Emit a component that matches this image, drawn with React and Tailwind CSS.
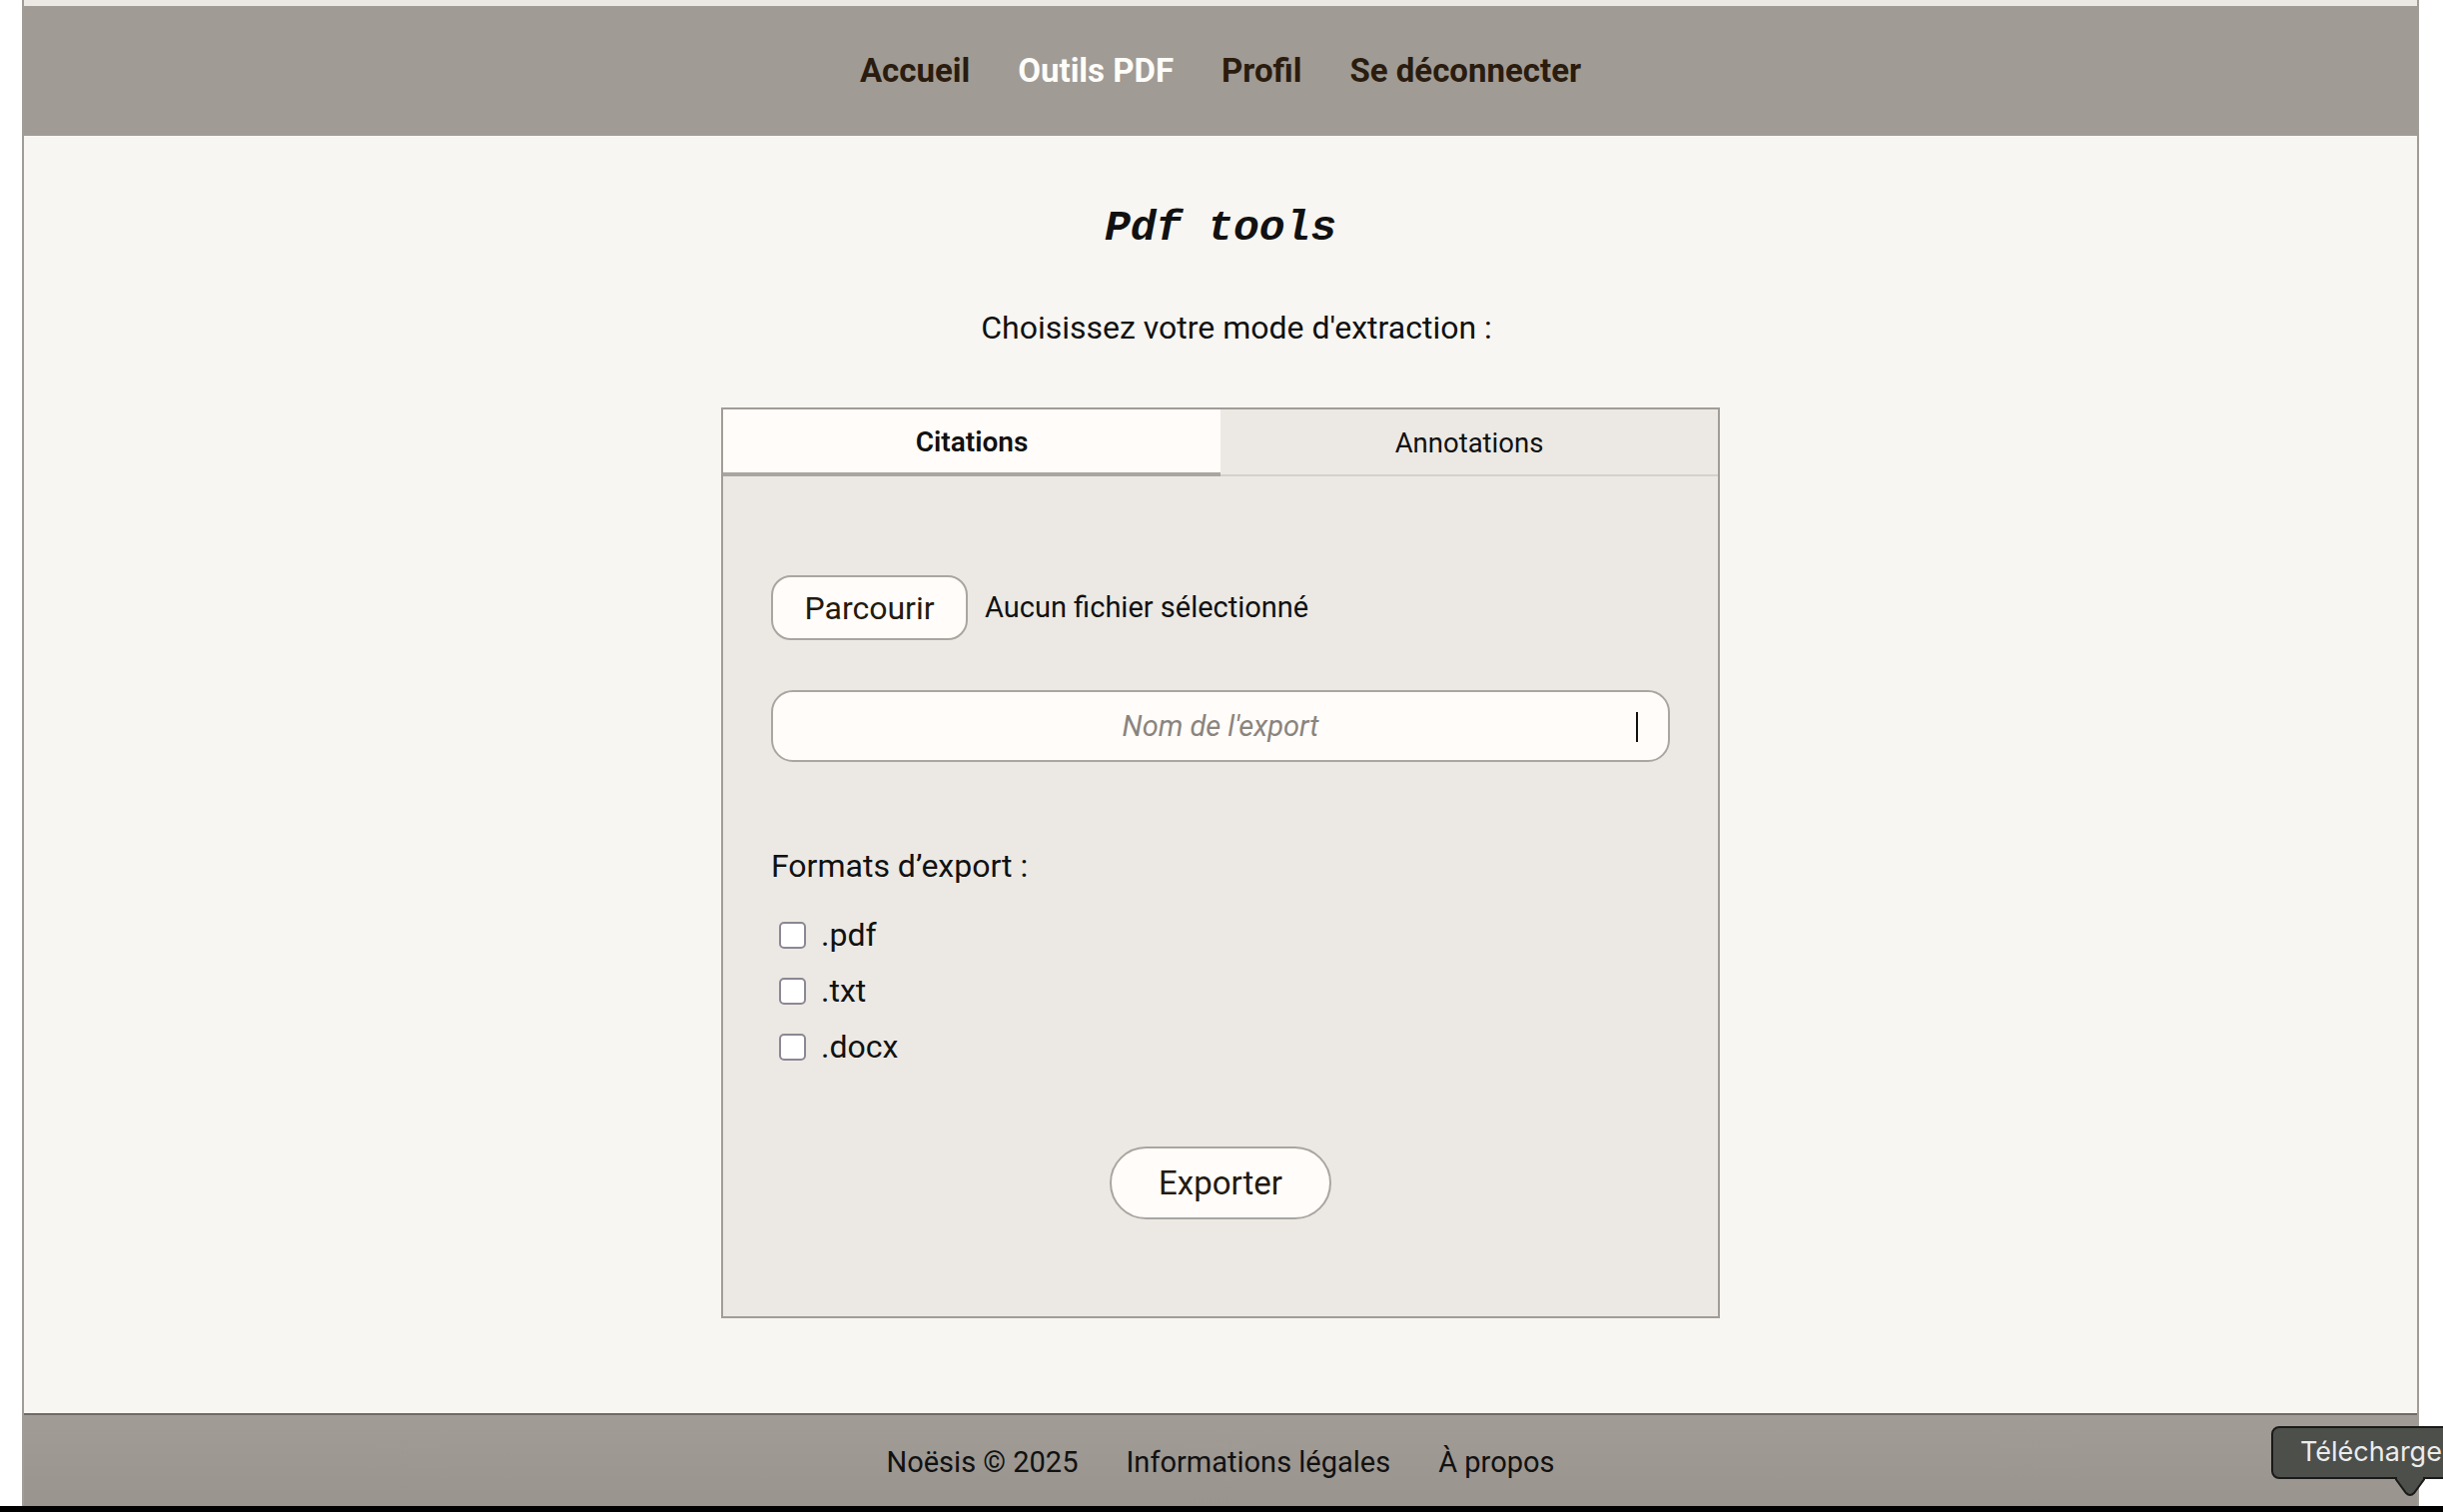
import { useState } from 'react';

const formats = ['.pdf', '.txt', '.docx'];

export default function App() {
  const [tab, setTab] = useState('citations');
  const [checked, setChecked] = useState({});

  const toggle = (f) => setChecked({ ...checked, [f]: !checked[f] });

  return (
    <div className="relative w-[2446px] h-[1514px] overflow-hidden bg-white flex flex-col font-['Roboto',sans-serif]">
      <div className="flex-1 flex pl-[22px] pr-[24px]">
        <div className="flex-1 flex flex-col border-x-2 border-[#a19c96]">
          <div className="h-[6px] bg-[#ece9e4]" />

          {/* barre de navigation */}
          <nav className="h-[130px] bg-[#a09b95] flex items-center justify-center gap-12 text-[33px] font-bold text-[#2a1c0e]">
            <a>Accueil</a>
            <a className="text-[#fffdf9]">Outils PDF</a>
            <a>Profil</a>
            <a>Se déconnecter</a>
          </nav>

          <main className="flex-1 bg-[#f7f6f2] flex flex-col items-center pt-[67px]">
            <h1 className="font-['Liberation_Mono',monospace] italic font-bold text-[43px] leading-[52px] text-[#111]">
              Pdf tools
            </h1>
            <p className="mt-[55px] pl-[32px] text-[32px] leading-[36px] text-[#111]">
              Choisissez votre mode d'extraction :
            </p>

            <div className="mt-[62px] w-[1000px] border-2 border-[#a19c96] bg-[#ece9e4]">
              <div className="flex h-[67px]">
                <button
                  onClick={() => setTab('citations')}
                  className={
                    tab === 'citations'
                      ? 'flex-1 pt-[2px] bg-[#fffcf9] border-b-4 border-[#aaa5a0] text-[28px] font-semibold text-[#111]'
                      : 'flex-1 pt-[2px] bg-[#ece9e4] border-b-2 border-[#d4d0cb] text-[27.5px] text-[#111]'
                  }
                >
                  Citations
                </button>
                <button
                  onClick={() => setTab('annotations')}
                  className={
                    tab === 'annotations'
                      ? 'flex-1 pt-[2px] bg-[#fffcf9] border-b-4 border-[#aaa5a0] text-[28px] font-semibold text-[#111]'
                      : 'flex-1 pt-[2px] bg-[#ece9e4] border-b-2 border-[#d4d0cb] text-[27.5px] text-[#111]'
                  }
                >
                  Annotations
                </button>
              </div>

              <div className="px-[48px] pt-[99px] pb-[97px] flex flex-col">
                <div className="flex items-center gap-[17px]">
                  <button className="w-[197px] h-[65px] rounded-[20px] border-2 border-[#aaa5a0] bg-[#fffcf9] text-[32px] text-[#231a10]">
                    Parcourir
                  </button>
                  <span className="text-[29px] text-[#111]">Aucun fichier sélectionné</span>
                </div>

                <div className="relative mt-[50px] h-[72px] rounded-[22px] border-2 border-[#aaa5a0] bg-[#fffcf9] flex items-center justify-center">
                  <span className="italic text-[29px] text-[#8a847e] pt-[2px]">Nom de l'export</span>
                  <span className="absolute right-[30px] top-[20px] w-[2px] h-[30px] bg-[#111]" />
                </div>

                <p className="mt-[86px] text-[32px] leading-[36px] text-[#111]">Formats d’export :</p>

                <div className="mt-[23px] flex flex-col">
                  {formats.map((f) => (
                    <label key={f} className="h-[56px] flex items-center gap-[15px] pl-[8px] text-[32px] text-[#111]">
                      <span
                        onClick={() => toggle(f)}
                        className="w-[27px] h-[27px] rounded-[5px] border-2 border-[#8c8794] bg-white"
                      />
                      {f}
                    </label>
                  ))}
                </div>

                <button className="mt-[72px] self-center w-[222px] h-[73px] rounded-full border-2 border-[#aaa5a0] bg-[#fffcf9] text-[33px] text-[#231a10]">
                  Exporter
                </button>
              </div>
            </div>
          </main>

          <footer className="h-[93px] pt-[4px] border-t-2 border-[#6f6a65] bg-gradient-to-b from-[#a19c96] to-[#99948e] flex items-center justify-center gap-12 text-[29px] text-[#111]">
            <span>Noësis © 2025</span>
            <a>Informations légales</a>
            <a>À propos</a>
          </footer>
        </div>
      </div>
      <div className="h-[6px] bg-black" />

      {/* infobulle */}
      <div className="absolute left-[2274px] top-[1428px] w-[220px] h-[53px] rounded-[8px] border-2 border-[#1a1a1a] bg-[#4d4f4b] flex items-center pl-[27px] text-[27px] text-[#ececea] font-['Inter',sans-serif]">
        Télécharger
      </div>
      <svg className="absolute left-[2398px] top-[1479px]" width="30" height="20" viewBox="0 0 30 20">
        <path d="M0 1 L11 16 Q15 20 19 16 L30 1 Z" fill="#4d4f4b" stroke="#1a1a1a" strokeWidth="2" />
        <rect x="2" y="0" width="26" height="2" fill="#4d4f4b" />
      </svg>
    </div>
  );
}
